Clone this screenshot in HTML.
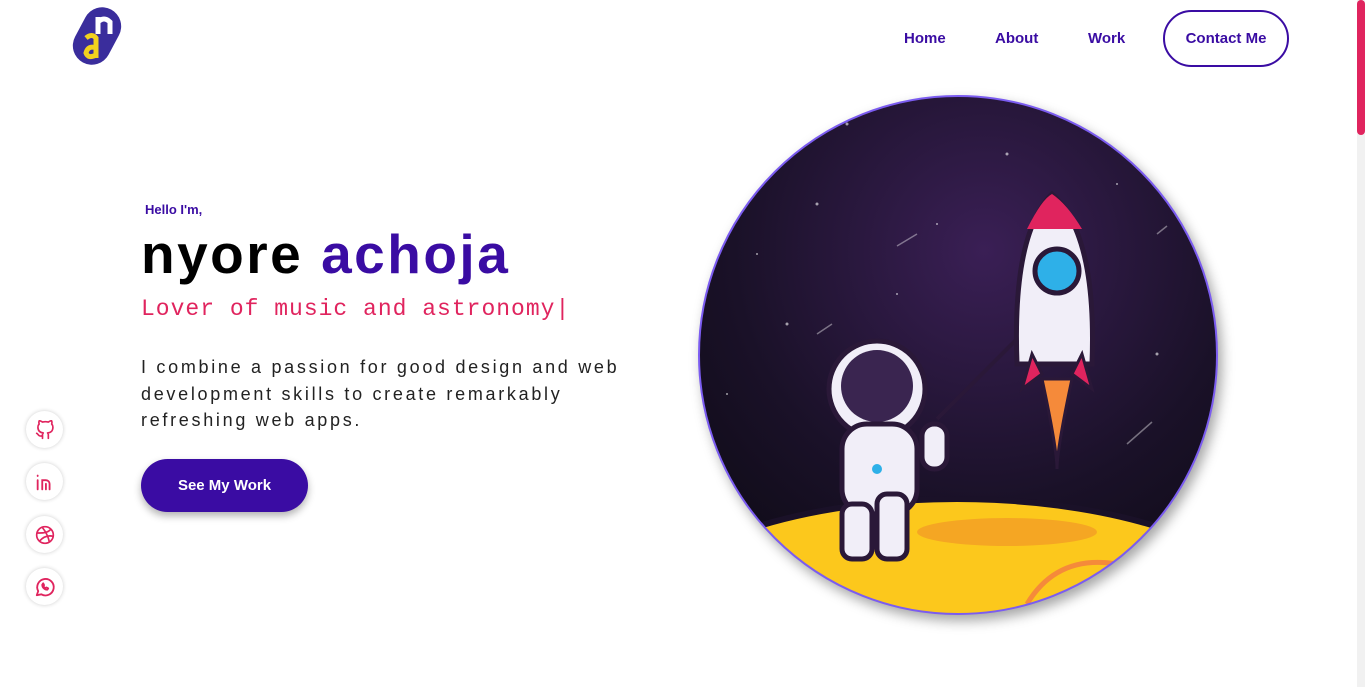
<!DOCTYPE html>
<html><head><meta charset="utf-8"><style>
*{margin:0;padding:0;box-sizing:border-box}
html,body{width:1365px;height:687px;overflow:hidden}
body{background:#fff;font-family:"Liberation Sans",sans-serif;position:relative}
.nav a{position:absolute;top:30px;font-size:15px;font-weight:bold;color:#3a0ca3;text-decoration:none}
.contact{position:absolute;left:1163px;top:10px;width:126px;height:57px;border:2px solid #3a0ca3;border-radius:29px;color:#3a0ca3;font-weight:bold;font-size:15px;display:flex;align-items:center;justify-content:center}
.soc{position:absolute;left:26px;width:37px;height:37px;border-radius:50%;background:#fff;box-shadow:0 0 4px rgba(0,0,0,.2);display:flex;align-items:center;justify-content:center}
.sb{position:absolute;right:0;top:0;width:8px;height:687px;background:#f1f1f1}
.sb div{height:135px;background:#e0245e;border-radius:4px}
</style></head><body>
<svg style="position:absolute;left:68px;top:4px" width="58" height="64" viewBox="0 0 58 64">
<g transform="rotate(28 29 32)"><rect x="10" y="2" width="38" height="60" rx="19" fill="#3a2d9c"/></g>
<path d="M30 30V13M30 18q6-6 12 0v12" stroke="#fff" stroke-width="5" fill="none"/>
<path d="M18 34q6-5 10 0v20M28 44q-8-3-10 5q2 6 10 2" stroke="#f2d21e" stroke-width="5" fill="none"/>
</svg>
<div class="nav"><a style="left:904px">Home</a><a style="left:995px">About</a><a style="left:1088px">Work</a></div>
<div class="contact">Contact Me</div>
<div style="position:absolute;left:145px;top:202px;font-size:13px;font-weight:bold;color:#3a0ca3">Hello I'm,</div>
<div style="position:absolute;left:141px;top:222px;font-size:55px;font-weight:bold;color:#000;letter-spacing:2.5px">nyore <span style="color:#3a0ca3">achoja</span></div>
<div style="position:absolute;left:141px;top:296px;font-family:'Liberation Mono',monospace;font-size:23px;color:#e0245e;letter-spacing:1px">Lover of music and astronomy|</div>
<div style="position:absolute;left:141px;top:354px;width:495px;font-size:18px;line-height:26.5px;color:#222;letter-spacing:2.7px">I combine a passion for good design and web development skills to create remarkably refreshing web apps.</div>
<div style="position:absolute;left:141px;top:459px;width:167px;height:53px;border-radius:27px;background:#3a0ca3;color:#fff;font-weight:bold;font-size:15px;display:flex;align-items:center;justify-content:center;box-shadow:0 4px 8px rgba(0,0,0,.3)">See My Work</div>
<div class="soc" style="top:411px"><svg width="20" height="20" viewBox="0 0 24 24" fill="none" stroke="#e0245e" stroke-width="2" stroke-linecap="round" stroke-linejoin="round"><path d="M9 19c-5 1.5-5-2.5-7-3m14 6v-3.9a3.4 3.4 0 0 0-.9-2.6c3.1-.4 6.4-1.5 6.4-7A5.4 5.4 0 0 0 20 4.8 5 5 0 0 0 19.9 1S18.7.6 16 2.5a13.4 13.4 0 0 0-7 0C6.3.6 5.1 1 5.1 1A5 5 0 0 0 5 4.8a5.4 5.4 0 0 0-1.5 3.7c0 5.4 3.3 6.6 6.4 7a3.4 3.4 0 0 0-.9 2.6V22"/></svg></div>
<div class="soc" style="top:463px"><svg width="22" height="22" viewBox="0 0 24 24" fill="none" stroke="#e0245e" stroke-width="2" stroke-linecap="round"><path d="M4 10v10M4 5v.5M9 20v-10h4a4 4 0 0 1 4 4v6M13 20v-6"/></svg></div>
<div class="soc" style="top:516px"><svg width="20" height="20" viewBox="0 0 24 24" fill="none" stroke="#e0245e" stroke-width="2"><circle cx="12" cy="12" r="10"/><path d="M8.6 2.7C13 8 16 14 17.4 21M19.1 5c-3.5 4-8.5 5-17 4.5M21.7 13.5c-6-1.4-12 .8-16.5 6"/></svg></div>
<div class="soc" style="top:568px"><svg width="22" height="22" viewBox="0 0 24 24" fill="none" stroke="#e0245e" stroke-width="2" stroke-linejoin="round"><path d="M3 21l1.6-4.5A9 9 0 1 1 8 20z"/><path d="M9 9.5c0 3 2.5 5.5 5.5 5.5l1-1.5-2-1-1 .8c-1-.5-1.8-1.3-2.3-2.3l.8-1-1-2L9 9.5z"/></svg></div>
<svg style="position:absolute;left:697px;top:94px;filter:drop-shadow(4px 6px 6px rgba(0,0,0,.35))" width="522" height="522" viewBox="0 0 522 522">
<defs><radialGradient id="bg" cx="0.55" cy="0.3" r="0.8"><stop offset="0" stop-color="#3a1f55"/><stop offset="0.6" stop-color="#1a1128"/><stop offset="1" stop-color="#0d0a14"/></radialGradient><clipPath id="c"><circle cx="261" cy="261" r="259"/></clipPath></defs>
<g clip-path="url(#c)">
<rect width="522" height="522" fill="url(#bg)"/>
<g fill="#fff" opacity=".6"><circle cx="150" cy="30" r="1.5"/><circle cx="120" cy="110" r="1.5"/><circle cx="60" cy="160" r="1"/><circle cx="310" cy="60" r="1.5"/><circle cx="420" cy="90" r="1"/><circle cx="90" cy="230" r="1.5"/><circle cx="200" cy="200" r="1"/><circle cx="460" cy="260" r="1.5"/><circle cx="240" cy="130" r="1"/><circle cx="30" cy="300" r="1"/><circle cx="380" cy="180" r="1"/></g>
<path d="M200 152l20-12M120 240l15-10M430 350l25-22M460 140l10-8" stroke="#fff" opacity=".4" stroke-width="1.5"/>
<ellipse cx="260" cy="540" rx="330" ry="135" fill="#fcc81c" stroke="#1a1128" stroke-width="6"/>
<ellipse cx="310" cy="438" rx="90" ry="14" fill="#f5a623"/>
<path d="M330 510q30-50 90-40" stroke="#f58a3a" stroke-width="5" fill="none"/>
<path d="M240 325L330 235" stroke="#2a1838" stroke-width="4"/>
<path d="M355 100q-40 40-35 170h75q5-130-40-170z" fill="#f1eef8" stroke="#2a1838" stroke-width="5"/>
<path d="M330 135q15-30 25-35q15 10 30 35z" fill="#e0245e"/>
<circle cx="360" cy="177" r="22" fill="#2eb0e8" stroke="#2a1838" stroke-width="5"/>
<path d="M335 260l-10 35 20-15zM385 260l10 35-20-15z" fill="#e0245e" stroke="#2a1838" stroke-width="3"/>
<path d="M345 285q15 70 15 90q0-20 15-90z" fill="#f58a3a" stroke="#2a1838" stroke-width="3"/>
<circle cx="180" cy="295" r="48" fill="#f1eef8" stroke="#2a1838" stroke-width="5"/>
<circle cx="180" cy="292" r="36" fill="#3a2550"/>
<rect x="145" y="330" width="75" height="90" rx="25" fill="#f1eef8" stroke="#2a1838" stroke-width="5"/>
<rect x="145" y="410" width="30" height="55" rx="10" fill="#f1eef8" stroke="#2a1838" stroke-width="5"/>
<rect x="180" y="400" width="30" height="65" rx="10" fill="#f1eef8" stroke="#2a1838" stroke-width="5"/>
<rect x="225" y="330" width="25" height="45" rx="12" fill="#f1eef8" stroke="#2a1838" stroke-width="5"/>
<circle cx="180" cy="375" r="5" fill="#2eb0e8"/>
</g>
<circle cx="261" cy="261" r="259" fill="none" stroke="#7b5cf0" stroke-width="2"/>
</svg>
<div class="sb"><div></div></div>
</body></html>
